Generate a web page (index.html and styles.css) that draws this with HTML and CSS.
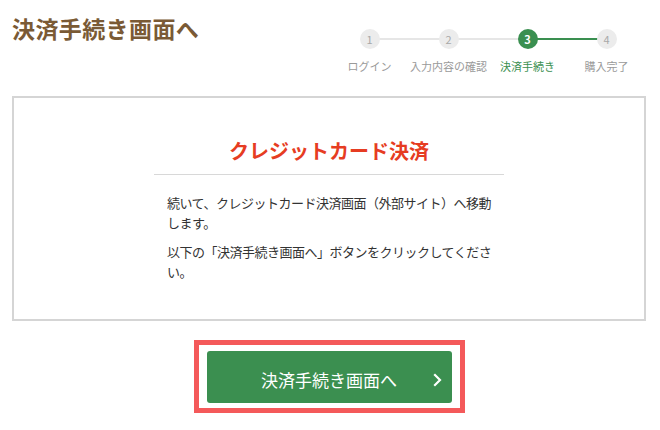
FILE: index.html
```html
<!DOCTYPE html>
<html lang="ja">
<head>
<meta charset="utf-8">
<title>決済手続き画面へ</title>
<link rel="stylesheet" href="styles.css">
</head>
<body>
<div class="page">
  <header class="header">
    <h1 class="title">決済手続き画面へ</h1>
    <ol class="steps">
      <li class="step done"><span class="dot">1</span><span class="label">ログイン</span></li>
      <li class="step done"><span class="dot">2</span><span class="label">入力内容の確認</span></li>
      <li class="step current"><span class="dot">3</span><span class="label">決済手続き</span></li>
      <li class="step"><span class="dot">4</span><span class="label">購入完了</span></li>
    </ol>
  </header>

  <section class="card">
    <div class="card-inner">
      <h2 class="card-title">クレジットカード決済</h2>
      <p class="text">続いて、クレジットカード決済画面（外部サイト）へ移動します。</p>
      <p class="text second">以下の「決済手続き画面へ」ボタンをクリックしてください。</p>
    </div>
  </section>

  <div class="action">
    <div class="frame">
      <button class="btn" type="button">
        <span class="btn-text">決済手続き画面へ</span>
        <svg class="chev" width="9" height="14" viewBox="0 0 9 14"><path d="M2 2 L7 7 L2 12" fill="none" stroke="#fff" stroke-width="2.2" stroke-linecap="square"/></svg>
      </button>
    </div>
  </div>
</div>
</body>
</html>
```

FILE: styles.css
```css
* { box-sizing: border-box; }
html, body { margin: 0; padding: 0; background: #fff; }
body {
  font-family: "Noto Sans CJK JP", "Noto Sans", "Liberation Sans", sans-serif;
  color: #333;
}
.page {
  padding: 13px 14px 0 12px;
}
.header {
  display: flex;
  justify-content: space-between;
  align-items: flex-start;
}
.title {
  margin: 0;
  font-size: 23px;
  line-height: 30px;
  font-weight: 700;
  color: #7a5a35;
  letter-spacing: 0.4px;
}
.steps {
  list-style: none;
  margin: 16px 0 0;
  padding: 0;
  display: grid;
  grid-template-columns: repeat(4, 79px);
}
.step {
  position: relative;
  display: flex;
  flex-direction: column;
  align-items: center;
}
.step::after {
  content: "";
  position: absolute;
  top: 9px;
  left: 50%;
  width: 79px;
  height: 2px;
  background: #e6e6e6;
  z-index: 0;
}
.step:last-child::after { display: none; }
.step.current::after { background: #3a8f50; height: 2px; }
.dot {
  position: relative;
  z-index: 1;
  width: 20px;
  height: 20px;
  border-radius: 50%;
  background: #ececec;
  color: #a8a8a8;
  font-size: 11px;
  line-height: 20px;
  text-align: center;
}
.step.current .dot {
  background: #3a8f50;
  color: #fff;
  font-weight: 700;
}
.label {
  margin-top: 9px;
  font-size: 11px;
  line-height: 16px;
  color: #9a9a9a;
  white-space: nowrap;
}
.step.current .label { color: #3a8f50; }

.card {
  margin-top: 22px;
  border: 2px solid #d5d5d5;
  height: 225px;
}
.card-inner {
  width: 350px;
  margin: 0 auto;
  padding-top: 39px;
}
.card-title {
  margin: 0;
  font-size: 20px;
  line-height: 28px;
  font-weight: 700;
  color: #e63c22;
  text-align: center;
  padding-bottom: 9px;
  border-bottom: 1px solid #d8d8d8;
}
.text {
  margin: 18px 0 0 13px;
  width: 332px;
  font-size: 13px;
  line-height: 20px;
  letter-spacing: -0.5px;
}
.text.second {
  margin-top: 9px;
}
.action {
  display: flex;
  justify-content: center;
  margin-top: 19px;
}
.frame {
  border: 5px solid #f4595a;
  padding: 6px 8px 5px 8px;
}
.btn {
  position: relative;
  display: flex;
  align-items: center;
  justify-content: center;
  width: 245px;
  height: 52px;
  border: none;
  border-radius: 3px;
  background: #3b8f50;
  color: #fff;
  font-family: inherit;
  font-size: 17px;
  padding: 0;
  padding-top: 4px;
  cursor: pointer;
}
.chev {
  position: absolute;
  right: 10px;
  top: 22px;
}
```
